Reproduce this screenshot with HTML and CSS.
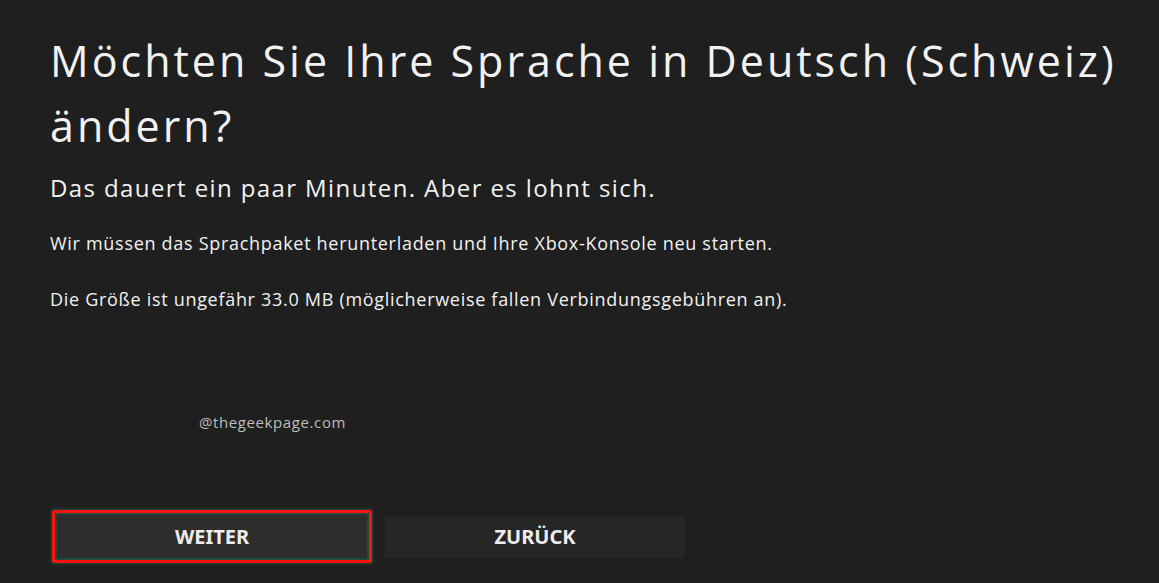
FILE: index.html
```html
<!DOCTYPE html>
<html lang="de">
<head>
<meta charset="utf-8">
<title>Sprache ändern</title>
<link rel="stylesheet" href="styles.css">
</head>
<body>
<main class="dialog">
  <h1 class="title">Möchten Sie Ihre Sprache in Deutsch (Schweiz) ändern?</h1>
  <p class="subtitle">Das dauert ein paar Minuten. Aber es lohnt sich.</p>
  <p class="body">Wir müssen das Sprachpaket herunterladen und Ihre Xbox-Konsole neu starten.</p>
  <p class="body body-second">Die Größe ist ungefähr 33.0 MB (möglicherweise fallen Verbindungsgebühren an).</p>
  <div class="watermark">@thegeekpage.com</div>
  <div class="actions">
    <button class="btn btn-focus">WEITER</button>
    <button class="btn">ZURÜCK</button>
  </div>
</main>
</body>
</html>
```
FILE: styles.css
```css
html, body {
  margin: 0;
  height: 100%;
  background: #1f1f1f;
}
body {
  font-family: "Open Sans", "Noto Sans", sans-serif;
  color: #f2f2f2;
  overflow: hidden;
}
.dialog {
  display: flex;
  flex-direction: column;
  padding: 28px 0 0 50px;
  height: 583px;
  box-sizing: border-box;
}
.title {
  margin: 0;
  font-weight: 400;
  font-size: 43px;
  line-height: 65px;
  width: 1100px;
  letter-spacing: 3px;
}
.subtitle {
  margin: 14px 0 0;
  font-size: 24px;
  line-height: 32px;
  letter-spacing: 1.4px;
}
.body {
  margin: 27px 0 0;
  font-size: 18px;
  line-height: 24px;
  letter-spacing: 0.7px;
}
.body-second {
  margin-top: 32px;
}
.watermark {
  margin: 101px 0 0 149px;
  font-size: 15px;
  line-height: 20px;
  color: #bdbdbd;
  letter-spacing: 0.6px;
}
.actions {
  display: flex;
  gap: 13px;
  margin-top: 78px;
  align-items: center;
}
.btn {
  font-family: "Noto Sans", sans-serif;
  font-weight: 700;
  font-size: 20px;
  color: #ededed;
  border: none;
  background: #262626;
  width: 300px;
  height: 42px;
  padding: 0;
}
.btn-focus {
  width: 320px;
  height: 53px;
  background: #2d2d2d;
  border: 3px solid #ff1010;
  box-shadow: inset 0 0 0 2px #1f4a3c, 0 0 3px 1px #1e4a3a;
  border-radius: 2px;
  margin-left: 2px;
}
```
